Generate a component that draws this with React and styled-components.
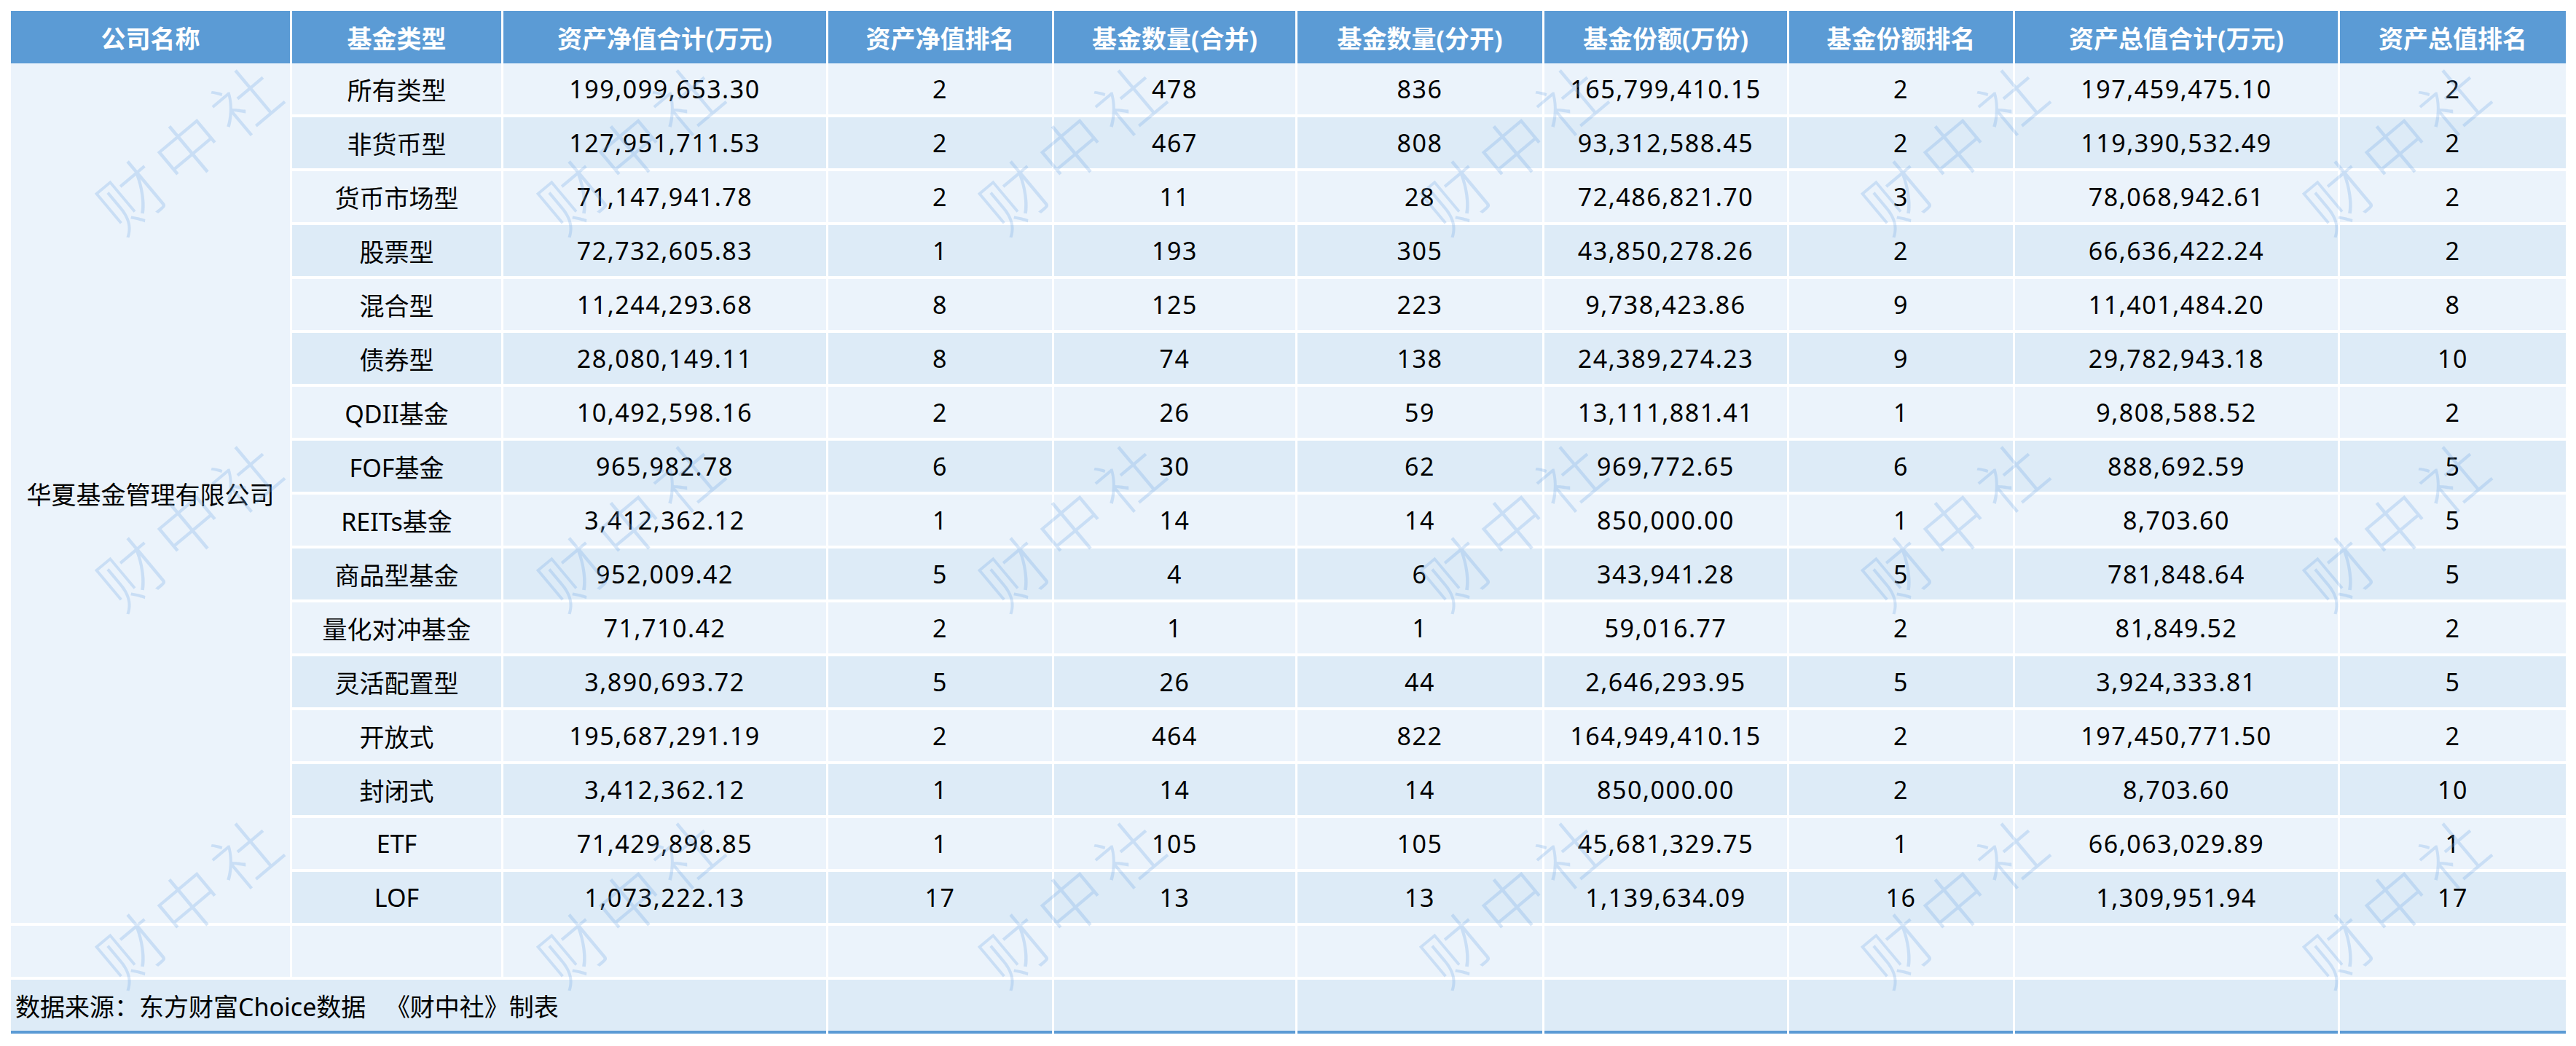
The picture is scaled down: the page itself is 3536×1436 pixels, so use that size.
import React from "react";
import styled, { createGlobalStyle } from "styled-components";

const GlobalStyle = createGlobalStyle`
  html, body {
    margin: 0;
    padding: 0;
    background: #fff;
  }
  body {
    font-family: "Noto Sans", "Noto Sans CJK SC", sans-serif;
  }
`;

const Page = styled.div`
  position: relative;
  width: 3536px;
  height: 1436px;
  overflow: hidden;
  padding: 15px 0 0 12px;
  box-sizing: border-box;
`;

const Sheet = styled.table`
  table-layout: fixed;
  border-collapse: separate;
  border-spacing: 3px 0;
  width: 3513px;
  font-family: "Noto Sans", "Noto Sans CJK SC", sans-serif;
  font-size: 34px;
  color: #000;
`;

const HeadCell = styled.th`
  background: #5b9bd5;
  color: #fff;
  font-weight: 700;
  height: 72px;
  padding: 0;
  text-align: center;
  vertical-align: middle;
  white-space: nowrap;
`;

const Cell = styled.td`
  background: ${(p) => (p.$shade ? "#ddebf7" : "#ebf3fb")};
  height: 70px;
  padding: ${(p) => (p.$left ? "0 0 0 6px" : "0")};
  border-bottom: 4px solid ${(p) => (p.$last ? "#5b9bd5" : "#fff")};
  text-align: ${(p) => (p.$left ? "left" : "center")};
  vertical-align: middle;
  white-space: nowrap;
  letter-spacing: ${(p) => (p.$num ? "1.5px" : "0")};
`;

// watermark layer lies over the sheet
const Watermarks = styled.div`
  position: absolute;
  left: -47px;
  top: -58px;
  display: grid;
  grid-template-columns: repeat(6, 606px);
  grid-auto-rows: 517px;
  place-items: center;
  pointer-events: none;
`;

const Mark = styled.span`
  transform: rotate(-40deg);
  font-family: "Noto Sans CJK SC", sans-serif;
  font-weight: 300;
  font-size: 90px;
  line-height: 1;
  letter-spacing: 12px;
  padding-left: 12px;
  color: rgba(110, 165, 230, 0.27);
  white-space: nowrap;
`;

const widths = [383, 287, 443, 307, 331, 336, 333, 307, 443, 310];

const heads = [
  "公司名称",
  "基金类型",
  "资产净值合计(万元)",
  "资产净值排名",
  "基金数量(合并)",
  "基金数量(分开)",
  "基金份额(万份)",
  "基金份额排名",
  "资产总值合计(万元)",
  "资产总值排名",
];

const rows = [
  ["所有类型", "199,099,653.30", "2", "478", "836", "165,799,410.15", "2", "197,459,475.10", "2"],
  ["非货币型", "127,951,711.53", "2", "467", "808", "93,312,588.45", "2", "119,390,532.49", "2"],
  ["货币市场型", "71,147,941.78", "2", "11", "28", "72,486,821.70", "3", "78,068,942.61", "2"],
  ["股票型", "72,732,605.83", "1", "193", "305", "43,850,278.26", "2", "66,636,422.24", "2"],
  ["混合型", "11,244,293.68", "8", "125", "223", "9,738,423.86", "9", "11,401,484.20", "8"],
  ["债券型", "28,080,149.11", "8", "74", "138", "24,389,274.23", "9", "29,782,943.18", "10"],
  ["QDII基金", "10,492,598.16", "2", "26", "59", "13,111,881.41", "1", "9,808,588.52", "2"],
  ["FOF基金", "965,982.78", "6", "30", "62", "969,772.65", "6", "888,692.59", "5"],
  ["REITs基金", "3,412,362.12", "1", "14", "14", "850,000.00", "1", "8,703.60", "5"],
  ["商品型基金", "952,009.42", "5", "4", "6", "343,941.28", "5", "781,848.64", "5"],
  ["量化对冲基金", "71,710.42", "2", "1", "1", "59,016.77", "2", "81,849.52", "2"],
  ["灵活配置型", "3,890,693.72", "5", "26", "44", "2,646,293.95", "5", "3,924,333.81", "5"],
  ["开放式", "195,687,291.19", "2", "464", "822", "164,949,410.15", "2", "197,450,771.50", "2"],
  ["封闭式", "3,412,362.12", "1", "14", "14", "850,000.00", "2", "8,703.60", "10"],
  ["ETF", "71,429,898.85", "1", "105", "105", "45,681,329.75", "1", "66,063,029.89", "1"],
  ["LOF", "1,073,222.13", "17", "13", "13", "1,139,634.09", "16", "1,309,951.94", "17"],
];

function App() {
  return (
    <Page>
      <GlobalStyle />
      <Sheet>
        <colgroup>
          {widths.map((w, i) => (
            <col key={i} style={{ width: w }} />
          ))}
        </colgroup>
        <thead>
          <tr>
            {heads.map((h) => (
              <HeadCell key={h}>{h}</HeadCell>
            ))}
          </tr>
        </thead>
        <tbody>
          {rows.map((r, i) => (
            <tr key={r[0]}>
              {i === 0 && <Cell rowSpan={rows.length}>华夏基金管理有限公司</Cell>}
              {r.map((v, j) => (
                <Cell key={j} $shade={i % 2 === 1} $num={j > 0}>
                  {v}
                </Cell>
              ))}
            </tr>
          ))}
          <tr>
            {widths.map((w, i) => (
              <Cell key={i} />
            ))}
          </tr>
          <tr>
            <Cell colSpan={3} $shade $last $left>
              数据来源：东方财富Choice数据{"\u00a0\u00a0 "}《财中社》制表
            </Cell>
            {widths.slice(3).map((w, i) => (
              <Cell key={i} $shade $last />
            ))}
          </tr>
        </tbody>
      </Sheet>
      <Watermarks>
        {Array.from({ length: 18 }).map((_, i) => (
          <Mark key={i}>财中社</Mark>
        ))}
      </Watermarks>
    </Page>
  );
}

export default App;
